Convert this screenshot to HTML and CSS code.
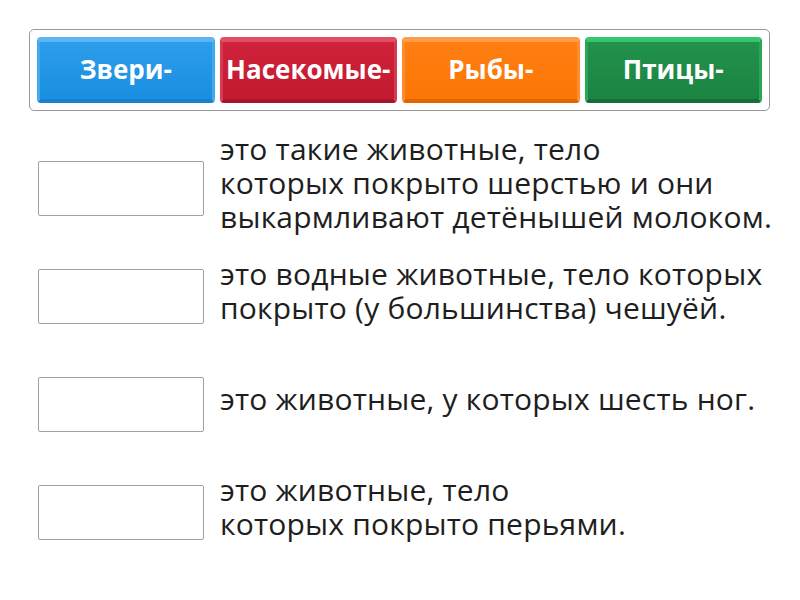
FILE: index.html
```html
<!DOCTYPE html>
<html lang="ru">
<head>
<meta charset="utf-8">
<link rel="stylesheet" href="styles.css">
</head>
<body>
<div class="bank">
  <div class="tile blue">Звери-</div>
  <div class="tile red">Насекомые-</div>
  <div class="tile orange">Рыбы-</div>
  <div class="tile green">Птицы-</div>
</div>
<div class="rows">
  <div class="row">
    <div class="slot"></div>
    <div class="desc">это такие животные, тело<br>которых покрыто шерстью и они<br>выкармливают детёнышей молоком.</div>
  </div>
  <div class="row">
    <div class="slot"></div>
    <div class="desc">это водные животные, тело которых<br>покрыто (у большинства) чешуёй.</div>
  </div>
  <div class="row">
    <div class="slot"></div>
    <div class="desc">это животные, у которых шесть ног.</div>
  </div>
  <div class="row">
    <div class="slot"></div>
    <div class="desc">это животные, тело<br>которых покрыто перьями.</div>
  </div>
</div>
</body>
</html>
```
FILE: styles.css
```css
html, body {
  margin: 0;
  padding: 0;
  background: #fff;
  font-family: "Open Sans", "Liberation Sans", sans-serif;
}
.bank {
  margin: 29px 0 0 29px;
  width: 725px;
  height: 66px;
  padding: 7px;
  border: 1px solid #999;
  border-radius: 5px;
  display: flex;
  gap: 5px;
}
.tile {
  flex: 1;
  box-sizing: border-box;
  border-radius: 4px;
  border-style: solid;
  border-width: 5px 3px 4px 3px;
  display: flex;
  align-items: center;
  justify-content: center;
  color: #fff;
  font-weight: 700;
  font-size: 26px;
  padding-bottom: 3px;
  white-space: nowrap;
}
.blue {
  background: linear-gradient(#2b9dea, #1a8fe0);
  border-color: #5ab6f2 #44a8ee #1a7fcc #44a8ee;
}
.red {
  background: linear-gradient(#d0223a, #c21a30);
  border-color: #e04e62 #d63a50 #a8142a #d63a50;
}
.orange {
  background: linear-gradient(#ff7f12, #fb7606);
  border-color: #ff9c48 #ff8c30 #e06400 #ff8c30;
}
.green {
  background: linear-gradient(#22924c, #1b8442);
  border-color: #36c76c #2aa658 #176e38 #2aa658;
}
.rows {
  margin-top: 23px;
  display: flex;
  flex-direction: column;
}
.row {
  height: 108px;
  display: flex;
  align-items: center;
  padding-left: 38px;
}
.slot {
  width: 164px;
  height: 53px;
  border: 1px solid #a0a0a0;
  border-radius: 2px;
  flex-shrink: 0;
}
.desc {
  margin-left: 16px;
  font-size: 30px;
  line-height: 34px;
  letter-spacing: 0.2px;
  color: #1e1e1e;
  white-space: nowrap;
  padding-bottom: 11px;
}
```
